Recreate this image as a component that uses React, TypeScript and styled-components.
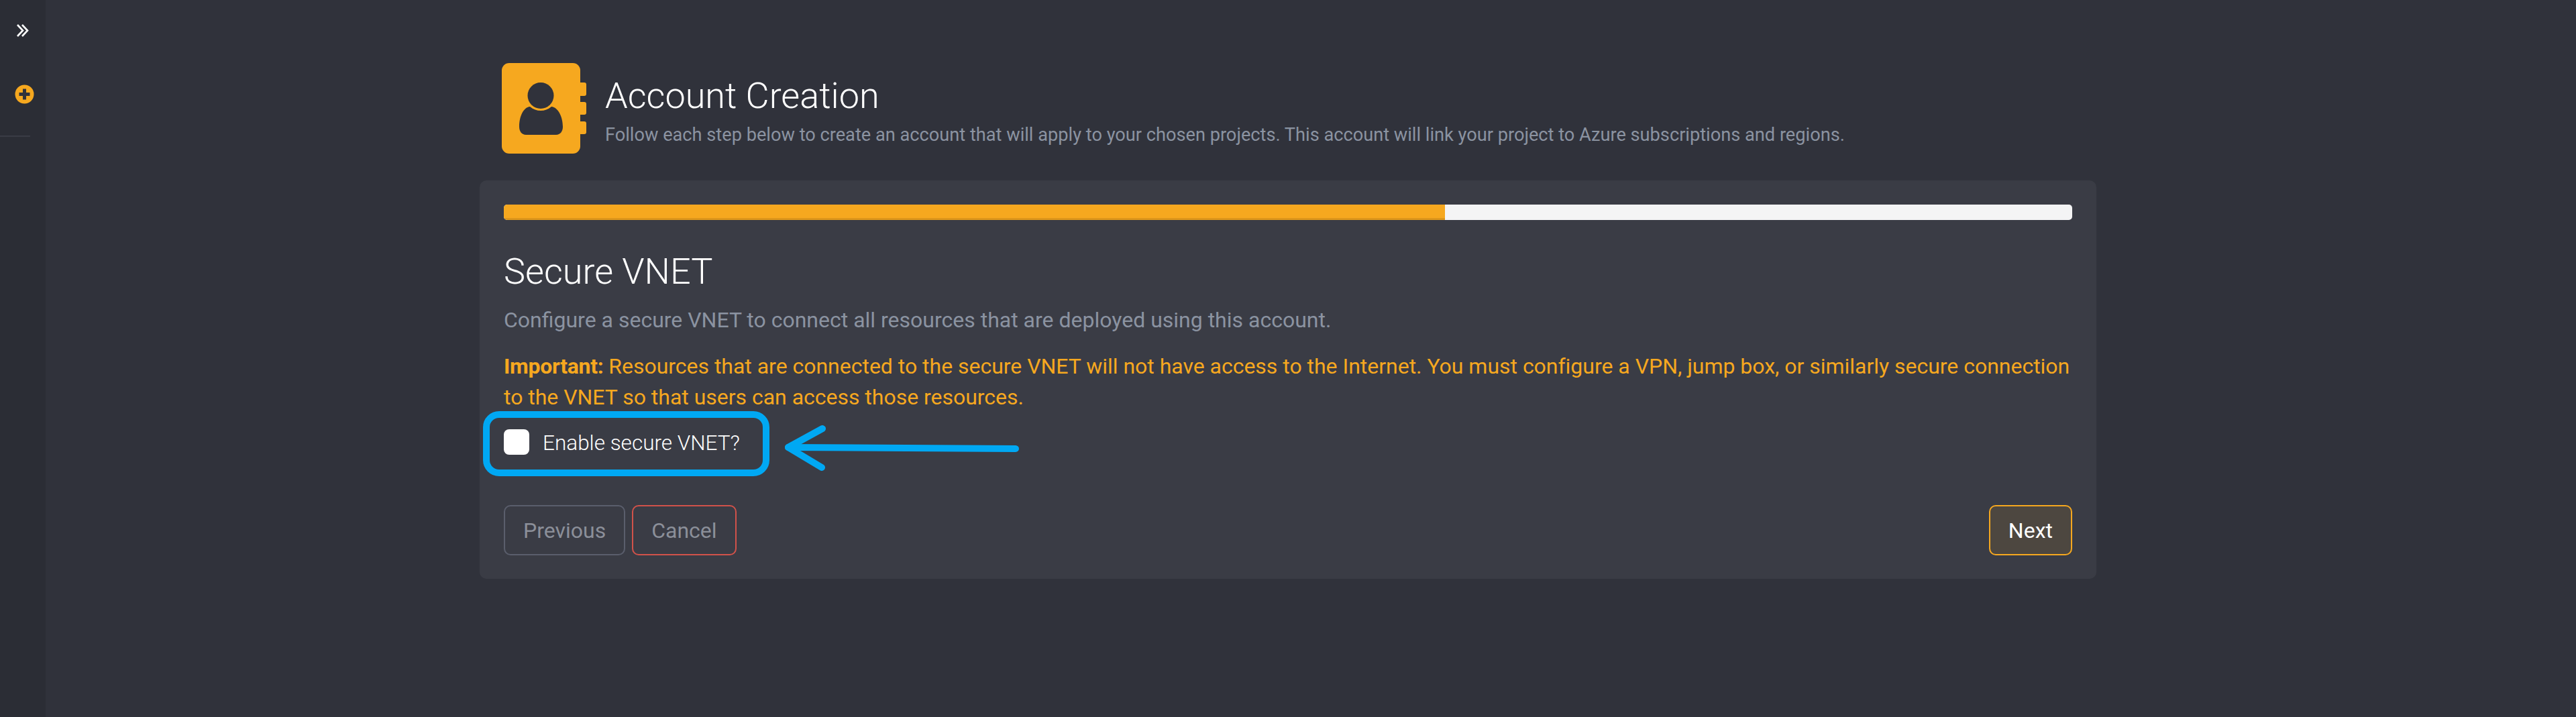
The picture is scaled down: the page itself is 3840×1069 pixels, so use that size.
import React from 'react';
import styled, { createGlobalStyle } from 'styled-components';

const GlobalStyle = createGlobalStyle`
    html, body {
        margin: 0;
        padding: 0;
        background: #30323b;
    }
    body {
        font-family: Roboto, "Liberation Sans", sans-serif;
    }
`

const ExpandIcon = () => (
    <svg width="18" height="19" viewBox="0 0 18 19" fill="none" stroke="#fff" strokeWidth="2.6">
        <path d="M1 1l8 8.5-8 8.5" />
        <path d="M8 1l8 8.5-8 8.5" />
    </svg>
)

const AddIcon = () => (
    <svg width="29" height="29" viewBox="0 0 29 29">
        <circle cx="14.5" cy="14.5" r="14" fill="#f6a81f" />
        <path d="M12 6.5h5V12h5.5v5H17v5.5h-5V17H6.5v-5H12z" fill="#30323b" />
    </svg>
)

const AddressBookIcon = () => (
    <svg width="126" height="135" viewBox="0 0 126 135">
        <rect x="0" y="0" width="117" height="135" rx="11" fill="#f6a81f" />
        <rect x="110" y="29" width="16" height="20" rx="3" fill="#f6a81f" />
        <rect x="110" y="58" width="16" height="19" rx="3" fill="#f6a81f" />
        <rect x="110" y="87" width="16" height="19" rx="3" fill="#f6a81f" />
        <ellipse cx="58" cy="48.5" rx="19.5" ry="19.5" fill="#30323b" />
        <path d="M42 65c5 4 10 6 16 6s11-2 16-6c10 1 17 15 17 30 0 7-4 12-10 12H36c-6 0-10-5-10-12 0-15 6-29 16-30z" fill="#30323b" />
    </svg>
)

export default function App() {
    const steps = 60

    return (
        <Page>
            <GlobalStyle />
            <Sidebar>
                <SideToggle><ExpandIcon /></SideToggle>
                <SideAction><AddIcon /></SideAction>
                <SideDivider />
            </Sidebar>

            <Main>
                <Content>
                    <Header>
                        <AddressBookIcon />
                        <HeaderText>
                            <PageTitle>Account Creation</PageTitle>
                            <PageSubtitle>
                                Follow each step below to create an account that will apply to your chosen projects. This account will link your project to Azure subscriptions and regions.
                            </PageSubtitle>
                        </HeaderText>
                    </Header>

                    <Panel>
                        <ProgressTrack>
                            <ProgressFill style={{ width: `${steps}%` }} />
                        </ProgressTrack>

                        <StepTitle>Secure VNET</StepTitle>
                        <StepText>Configure a secure VNET to connect all resources that are deployed using this account.</StepText>
                        <Warning>
                            <strong>Important:</strong> Resources that are connected to the secure VNET will not have access to the Internet. You must configure a VPN, jump box, or similarly secure connection to the VNET so that users can access those resources.
                        </Warning>

                        <CheckRow>
                            <CheckBox />
                            <CheckLabel>Enable secure VNET?</CheckLabel>
                            <Highlight />
                            <ArrowMark width="350" height="68" viewBox="0 0 350 68" fill="none" stroke="#00a8f3" strokeWidth="10" strokeLinecap="round" strokeLinejoin="round">
                                <path d="M345 35L6 33" />
                                <path d="M57 5L6 33l50 30" />
                            </ArrowMark>
                        </CheckRow>

                        <Actions>
                            <LeftActions>
                                <ActionButton $variant="muted">Previous</ActionButton>
                                <ActionButton $variant="danger">Cancel</ActionButton>
                            </LeftActions>
                            <ActionButton $variant="primary">Next</ActionButton>
                        </Actions>
                    </Panel>
                </Content>
            </Main>
        </Page>
    )
}

const Page = styled.div`
    display: flex;
    width: 3840px;
    height: 1069px;
    overflow: hidden;
    background: #30323b;
`

const Sidebar = styled.aside`
    flex: 0 0 68px;
    display: flex;
    flex-direction: column;
    background: #2b2d35;
`

const SideToggle = styled.div`
    display: flex;
    padding: 36px 0 0 25px;
    height: 55px;
    box-sizing: border-box;
    svg { display: block; }
`

const SideAction = styled.div`
    display: flex;
    padding: 71px 0 0 22px;
    svg { display: block; }
`

const SideDivider = styled.div`
    width: 45px;
    height: 2px;
    margin-top: 47px;
    background: #3a3c45;
`

const Main = styled.main`
    flex: 1;
    display: flex;
    justify-content: center;
    padding: 94px 68px 0 0;
`

const Content = styled.div`
    width: 2410px;
`

const Header = styled.header`
    display: flex;
    gap: 28px;
    padding-left: 33px;
    margin-bottom: 40px;
    svg { display: block; flex-shrink: 0; }
`

const HeaderText = styled.div`
    padding-top: 17px;
`

const PageTitle = styled.h1`
    margin: 0;
    font-size: 54px;
    line-height: 64px;
    font-weight: 300;
    color: #fff;
`

const PageSubtitle = styled.p`
    margin: 8px 0 0;
    font-size: 27.2px;
    line-height: 36px;
    font-weight: 400;
    color: #8b93a1;
    white-space: nowrap;
`

const Panel = styled.section`
    box-sizing: border-box;
    height: 594px;
    padding: 36px;
    border-radius: 10px;
    background: #3a3c45;
`

const ProgressTrack = styled.div`
    height: 23px;
    border-radius: 5px;
    overflow: hidden;
    background: #f4f4f5;
`

const ProgressFill = styled.div`
    height: 100%;
    background: #f6a81f;
    box-shadow: inset 0 -3px 0 rgba(0, 0, 0, .1);
`

const StepTitle = styled.h2`
    margin: 45px 0 0;
    font-size: 54px;
    line-height: 64px;
    font-weight: 300;
    color: #fff;
`

const StepText = styled.p`
    margin: 18px 0 0;
    font-size: 32px;
    line-height: 44px;
    color: #8b93a1;
`

const Warning = styled.p`
    margin: 24px 0 0;
    font-size: 32px;
    line-height: 46px;
    letter-spacing: -0.02px;
    color: #f6a81f;
    strong { font-weight: 700; letter-spacing: -0.3px; }
`

const CheckRow = styled.div`
    position: relative;
    display: flex;
    align-items: center;
    gap: 20px;
    height: 38px;
    margin-top: 25px;
`

const CheckBox = styled.span`
    width: 38px;
    height: 38px;
    border-radius: 8px;
    background: #fff;
`

const CheckLabel = styled.label`
    padding-top: 3px;
    font-size: 31.5px;
    font-weight: 300;
    color: #fff;
`

const Highlight = styled.div`
    position: absolute;
    left: -31px;
    top: -27px;
    box-sizing: border-box;
    width: 427px;
    height: 97px;
    border: 10px solid #00a8f3;
    border-radius: 24px;
`

const ArrowMark = styled.svg`
    position: absolute;
    left: 418px;
    top: -6px;
`

const Actions = styled.div`
    display: flex;
    justify-content: space-between;
    margin-top: 75px;
`

const LeftActions = styled.div`
    display: flex;
    gap: 10px;
`

const buttonTone = {
    muted: 'border-color: #5a5e6c; color: #8b8f99;',
    danger: 'border-color: #d1524a; color: #8b8f99;',
    primary: 'border-color: #f6a81f; color: #fff; background: #4d4740;',
}

const ActionButton = styled.button<{ $variant: keyof typeof buttonTone }>`
    box-sizing: border-box;
    height: 75px;
    padding: 0 27px;
    border: 2px solid;
    border-radius: 10px;
    background: transparent;
    font-family: inherit;
    font-size: 32px;
    ${props => buttonTone[props.$variant]}
`
